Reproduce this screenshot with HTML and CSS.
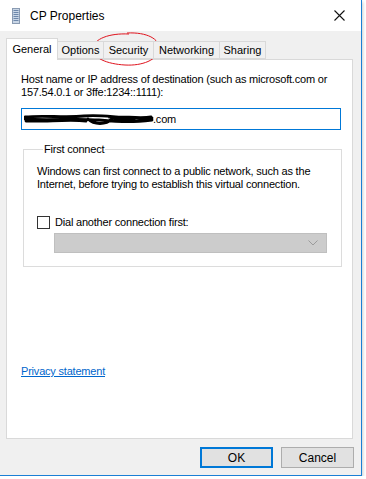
FILE: index.html
```html
<!DOCTYPE html>
<html lang="en">
<head>
    <meta charset="UTF-8">
    <title>CP Properties</title>
    <link rel="stylesheet" href="styles.css">
</head>
<body>
    <div class="window">
        <!-- Заголовок окна -->
        <div class="titlebar">
            <svg class="app-icon" width="8" height="16" viewBox="0 0 8 16">
                <rect x="0.5" y="0.5" width="7" height="15" fill="#c9d6e6" stroke="#8a9bb2"/>
                <rect x="1.5" y="2" width="5" height="1" fill="#6d87aa"/>
                <rect x="1.5" y="4" width="5" height="1" fill="#6d87aa"/>
                <rect x="1.5" y="6" width="5" height="1" fill="#6d87aa"/>
                <rect x="1.5" y="8" width="5" height="1" fill="#6d87aa"/>
                <rect x="1.5" y="10" width="5" height="1" fill="#6d87aa"/>
                <rect x="1.5" y="12" width="5" height="1" fill="#6d87aa"/>
            </svg>
            <span class="title">CP Properties</span>
            <svg class="close" width="11" height="11" viewBox="0 0 11 11">
                <path d="M0.5 0.5 L10.5 10.5 M10.5 0.5 L0.5 10.5" stroke="#111" stroke-width="1.1" fill="none"/>
            </svg>
        </div>

        <div class="content">
            <!-- Вкладки -->
            <div class="tabs">
                <div class="tab active w-general">General</div>
                <div class="tab w-options">Options</div>
                <div class="tab w-security">Security</div>
                <div class="tab w-networking">Networking</div>
                <div class="tab w-sharing">Sharing</div>
            </div>

            <div class="panel">
                <p class="text">Host name or IP address of destination (such as microsoft.com or<br>157.54.0.1 or 3ffe:1234::1111):</p>
                <div class="input">
                    <svg class="scribble" width="130" height="14" viewBox="0 0 130 14">
                        <path d="M1 5 C20 3, 40 6, 60 4 S 95 7, 128 6 M1 7 C 25 9, 50 6, 75 8 S 110 10, 128 8 M2 9 C 20 10, 45 7, 62 9 M64 7 C 70 13, 82 13, 88 7 M85 5 C 100 4, 115 7, 127 5 M90 6 C 98 9, 106 9, 112 6" stroke="#000" stroke-width="2.8" fill="none" stroke-linecap="round"/>
                    </svg>
                    <span>.com</span>
                </div>

                <fieldset class="group">
                    <legend>First connect</legend>
                    <p class="text">Windows can first connect to a public network, such as the<br>Internet, before trying to establish this virtual connection.</p>
                    <label class="check-row">
                        <span class="checkbox"></span>
                        <span>Dial another connection first:</span>
                    </label>
                    <div class="combo">
                        <svg width="10" height="6" viewBox="0 0 10 6">
                            <path d="M0.5 0.5 L5 5 L9.5 0.5" stroke="#9b9b9b" fill="none"/>
                        </svg>
                    </div>
                </fieldset>

                <a class="link" href="#">Privacy statement</a>
            </div>

            <div class="buttons">
                <button class="btn default">OK</button>
                <button class="btn">Cancel</button>
            </div>
        </div>

        <!-- Красный кружок вокруг вкладки -->
        <svg class="mark" width="80" height="40" viewBox="0 0 80 40">
            <path d="M40 3 C 60 2, 73 9, 72 19 C 71 30, 55 36, 38 35 C 20 34, 5 28, 6 18 C 7 9, 22 3, 42 4" stroke="#e0141e" stroke-width="1" fill="none"/>
        </svg>
    </div>
</body>
</html>
```

FILE: styles.css
```css
/* Основные стили */
body {
    margin: 0;
    background: #fff;
    font-family: "Liberation Sans", Arial, sans-serif;
    font-size: 11px;
    letter-spacing: -0.2px;
    color: #000;
}
.window {
    position: relative;
    width: 361px;
    height: 475px;
    background: #f0f0f0;
    border-right: 1px solid #1a7fd4;
    border-bottom: 1px solid #1a7fd4;
    box-shadow: 1px 2px 3px rgba(0, 0, 0, 0.2);
    display: flex;
    flex-direction: column;
}
.titlebar {
    height: 31px;
    background: #fff;
    display: flex;
    align-items: center;
}
.app-icon {
    margin-left: 12px;
}
.title {
    margin-left: 10px;
    font-size: 12px;
    letter-spacing: 0;
    flex: 1;
}
.close {
    margin-right: 16px;
}
.content {
    flex: 1;
    padding: 6px 7px 0 6px;
}
.tabs {
    display: flex;
    align-items: flex-end;
    height: 22px;
    position: relative;
    z-index: 1;
}
.tab {
    box-sizing: border-box;
    height: 18px;
    line-height: 17px;
    text-align: center;
    border: 1px solid #d9d9d9;
    border-left: none;
    background: #f0f0f0;
    white-space: nowrap;
    letter-spacing: 0;
}
.tab.active {
    height: 22px;
    line-height: 20px;
    background: #fff;
    border-left: 1px solid #d9d9d9;
    border-bottom: none;
    margin-bottom: -1px;
}
.w-general { width: 52px; }
.w-options { width: 46px; }
.w-security { width: 50px; }
.w-networking { width: 66px; }
.w-sharing { width: 46px; }
.panel {
    height: 365px;
    margin-right: 1px;
    background: #fff;
    border: 1px solid #d9d9d9;
    padding: 13px 14px 0 14px;
}
.text {
    margin: 0;
    line-height: 13px;
    white-space: nowrap;
}
.input {
    margin-top: 9px;
    width: 316px;
    height: 20px;
    border: 1px solid #0078d7;
    display: flex;
    align-items: center;
    padding-left: 2px;
}
.scribble {
    margin-right: -1px;
}
.group {
    margin: 13px 0 0 2px;
    width: 291px;
    padding: 9px 13px 13px 13px;
    border: 1px solid #dcdcdc;
}
.group legend {
    padding: 0 1px;
    margin-left: 6px;
    line-height: 13px;
}
.check-row {
    display: flex;
    align-items: center;
    margin-top: 25px;
    line-height: 13px;
}
.checkbox {
    width: 11px;
    height: 11px;
    border: 1px solid #333;
    margin-right: 5px;
}
.combo {
    margin: 4px 0 0 17px;
    width: 263px;
    height: 18px;
    background: #cccccc;
    border: 1px solid #bfbfbf;
    display: flex;
    align-items: center;
    justify-content: flex-end;
    padding-right: 8px;
}
.link {
    display: inline-block;
    margin-top: 98px;
    color: #0066cc;
    line-height: 13px;
}
.buttons {
    display: flex;
    justify-content: flex-end;
    gap: 8px;
    margin-top: 8px;
}
.btn {
    width: 73px;
    height: 21px;
    background: #e1e1e1;
    border: 1px solid #adadad;
    font-family: inherit;
    font-size: 12px;
    padding: 0;
}
.btn.default {
    border: 2px solid #0078d7;
}
.mark {
    position: absolute;
    left: 87px;
    top: 30px;
}
```
